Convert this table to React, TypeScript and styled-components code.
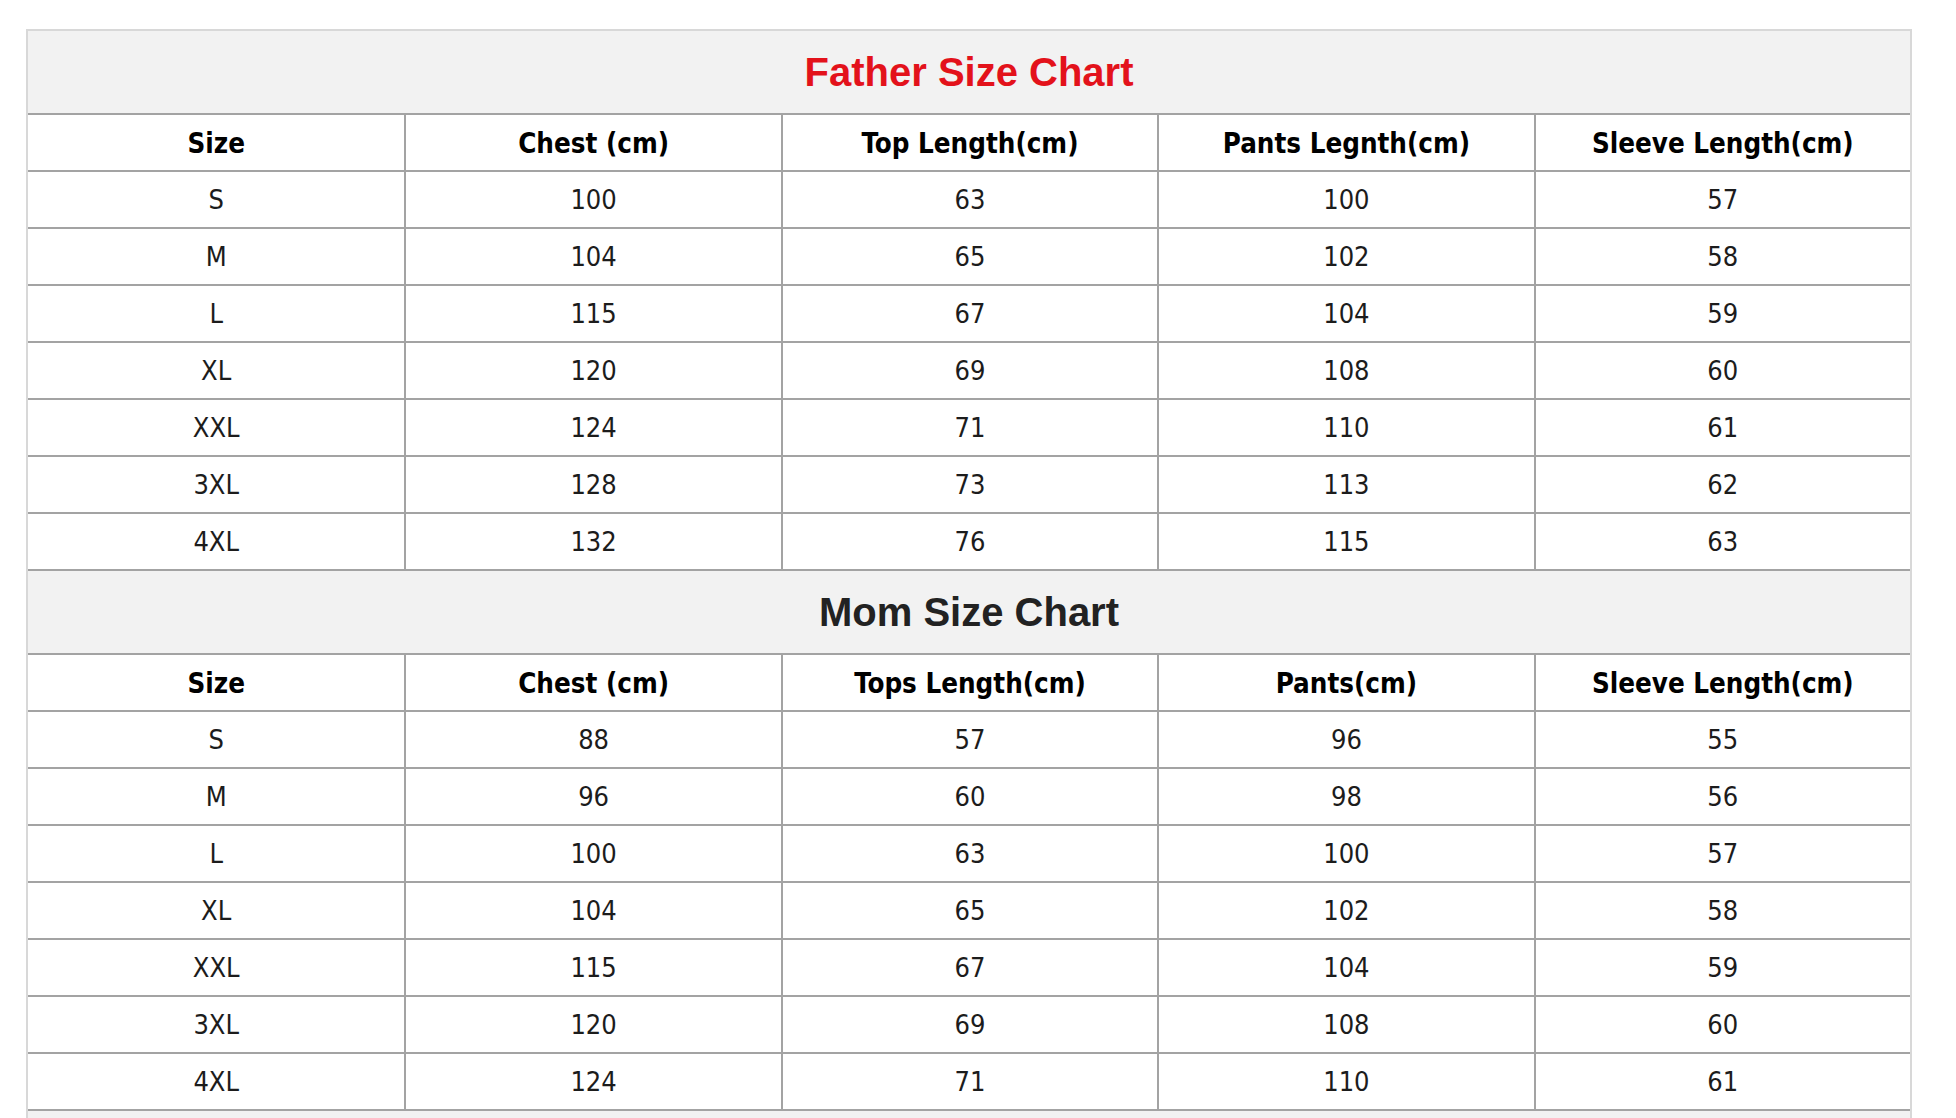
import styled, { createGlobalStyle } from 'styled-components';

const GlobalStyle = createGlobalStyle`
  html, body {
    margin: 0;
    padding: 0;
    background: #ffffff;
  }
  body {
    font-family: "DejaVu Sans Condensed", "DejaVu Sans", Tahoma, sans-serif;
  }
`;

type SizeRow = string[];

interface ChartData {
    title: string;
    color: string;
    headers: string[];
    rows: SizeRow[];
}

const charts: ChartData[] = [
    {
        title: 'Father Size Chart',
        color: '#e3121b',
        headers: ['Size', 'Chest (cm)', 'Top Length(cm)', 'Pants Legnth(cm)', 'Sleeve Length(cm)'],
        rows: [
            ['S', '100', '63', '100', '57'],
            ['M', '104', '65', '102', '58'],
            ['L', '115', '67', '104', '59'],
            ['XL', '120', '69', '108', '60'],
            ['XXL', '124', '71', '110', '61'],
            ['3XL', '128', '73', '113', '62'],
            ['4XL', '132', '76', '115', '63'],
        ],
    },
    {
        title: 'Mom Size Chart',
        color: '#222222',
        headers: ['Size', 'Chest (cm)', 'Tops Length(cm)', 'Pants(cm)', 'Sleeve Length(cm)'],
        rows: [
            ['S', '88', '57', '96', '55'],
            ['M', '96', '60', '98', '56'],
            ['L', '100', '63', '100', '57'],
            ['XL', '104', '65', '102', '58'],
            ['XXL', '115', '67', '104', '59'],
            ['3XL', '120', '69', '108', '60'],
            ['4XL', '124', '71', '110', '61'],
        ],
    },
];

export default function App() {
    return (
        <>
            <GlobalStyle />
            <Page>
                <Chart>
                    {charts.map(chart => (
                        <section key={chart.title}>
                            <TitleRow>
                                <Title color={chart.color}>{chart.title}</Title>
                            </TitleRow>
                            <Row>
                                {chart.headers.map(h => (
                                    <Cell key={h} $head>{h}</Cell>
                                ))}
                            </Row>
                            {chart.rows.map(row => (
                                <Row key={row[0]}>
                                    {row.map((value, i) => (
                                        <Cell key={i}>{value}</Cell>
                                    ))}
                                </Row>
                            ))}
                        </section>
                    ))}
                    <TitleRow />
                </Chart>
            </Page>
        </>
    );
}

const Page = styled.div`
    padding: 29px 0 0 26px;
`;

const Chart = styled.div`
    width: 1886px;
    box-sizing: border-box;
    border: 2px solid #d8d8d8;
    border-bottom: none;
`;

const TitleRow = styled.div`
    height: 82px;
    background: #f2f2f2;
    border-bottom: 2px solid #a3a3a3;
    display: flex;
    align-items: center;
    justify-content: center;
`;

const Title = styled.h2<{ color: string }>`
    margin: 0;
    font-family: "Liberation Sans", Arial, sans-serif;
    font-weight: 700;
    font-size: 40px;
    color: ${p => p.color};
`;

const Row = styled.div`
    display: grid;
    grid-template-columns: repeat(5, 1fr);
    height: 55px;
    border-bottom: 2px solid #a3a3a3;
    background: #ffffff;
`;

const Cell = styled.div<{ $head?: boolean }>`
    display: flex;
    align-items: center;
    justify-content: center;
    font-size: ${p => (p.$head ? '27.5px' : '27px')};
    font-weight: ${p => (p.$head ? 700 : 400)};
    color: ${p => (p.$head ? '#000000' : '#1c1c1c')};

    & + & {
        border-left: 2px solid #a3a3a3;
    }
`;
